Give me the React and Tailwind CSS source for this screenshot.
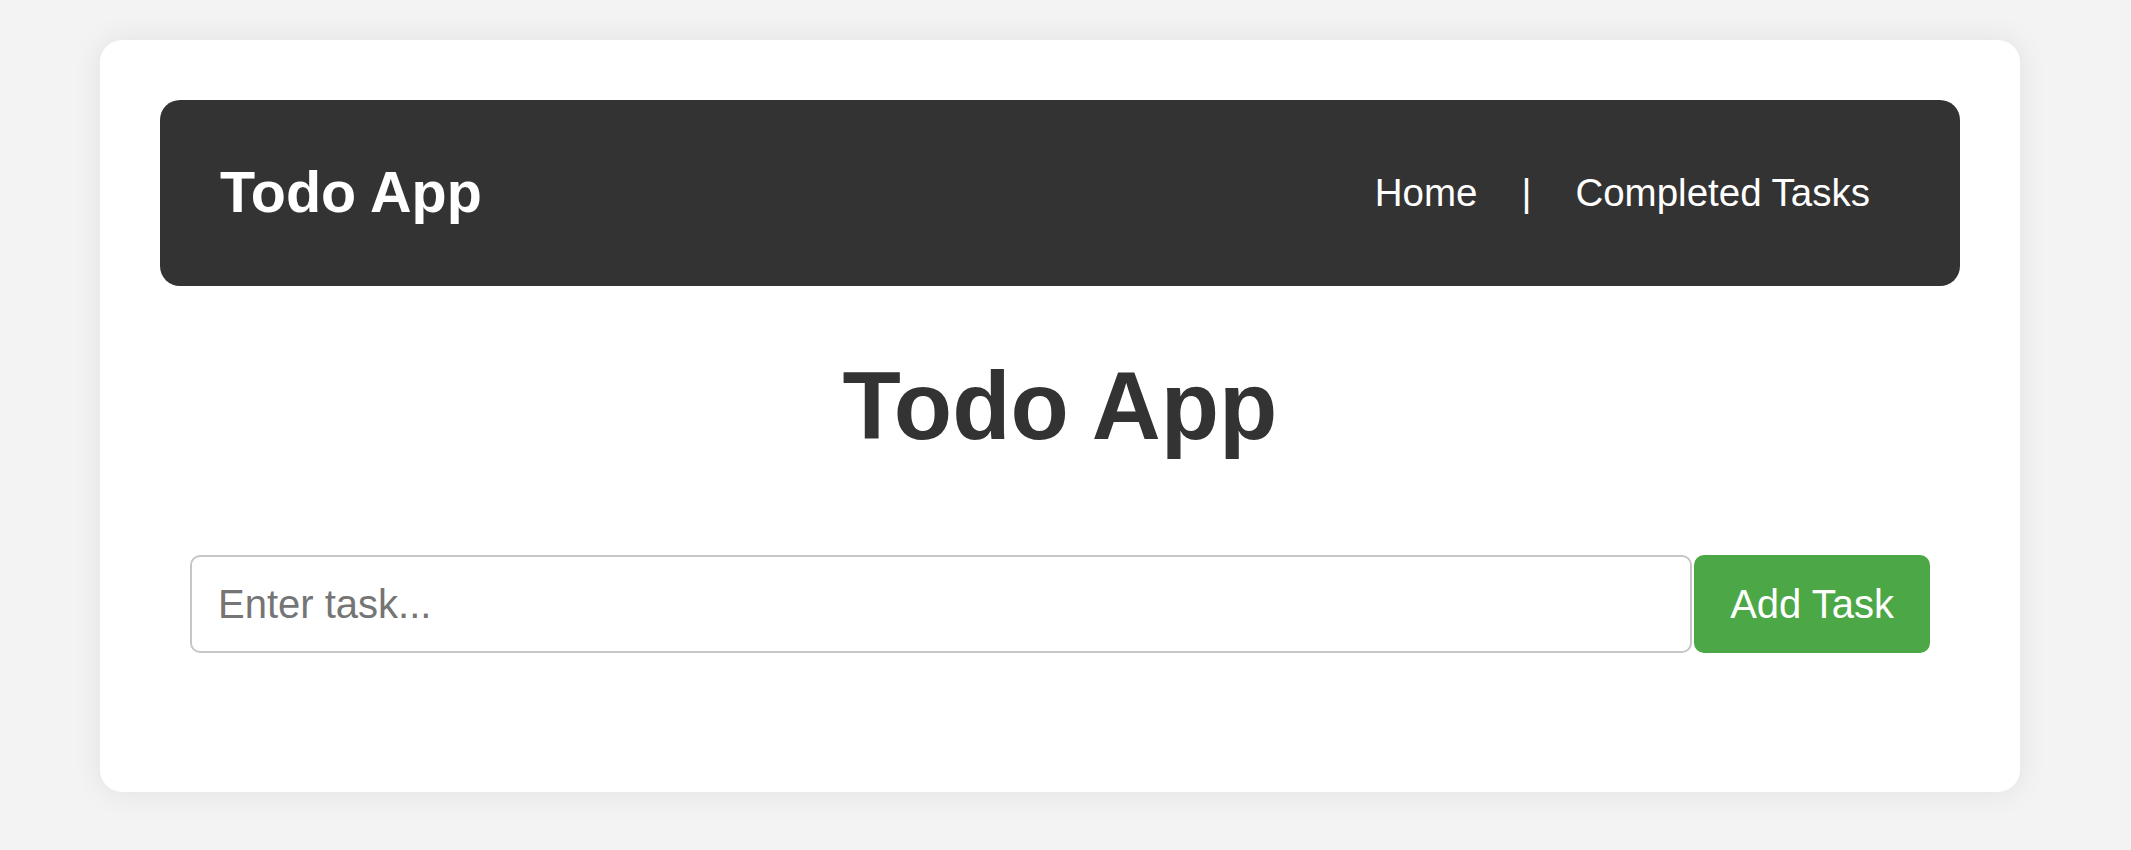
import React from "react";

export default function App() {
  return (
    <div
      className="min-h-[850px] w-full bg-[#f3f3f3] pt-[40px]"
      style={{ fontFamily: '"Liberation Sans", Arial, sans-serif' }}
    >
      <div className="ml-[100px] w-[1920px] h-[752px] rounded-[22px] bg-white p-[60px] shadow-[0_0_30px_rgba(0,0,0,0.08)] flex flex-col">
        <nav className="h-[186px] rounded-[20px] bg-[#333333] px-[60px] flex items-center justify-between text-white">
          <div className="text-[57.5px] font-bold leading-none">Todo App</div>
          <div className="flex items-center gap-[44px] mr-[30px] text-[38.5px] leading-none">
            <a className="text-white">Home</a>
            <span>|</span>
            <a className="text-white">Completed Tasks</a>
          </div>
        </nav>
        <h1 className="mt-[66px] text-center text-[95.5px] leading-[108px] font-bold text-[#333333]">
          Todo App
        </h1>
        <div className="mt-[95px] px-[30px] flex items-stretch gap-[2px]">
          <input
            type="text"
            placeholder="Enter task..."
            className="flex-1 h-[98px] rounded-[10px] border-2 border-[#c6c6c6] bg-white px-[26px] text-[40px] text-[#333333] placeholder:text-[#757575] outline-none"
            style={{ fontFamily: '"Liberation Sans", Arial, sans-serif' }}
          />
          <button
            className="h-[98px] rounded-[10px] bg-[#4ca847] px-[36px] text-[40px] text-white"
            style={{ fontFamily: '"Liberation Sans", Arial, sans-serif' }}
          >
            Add Task
          </button>
        </div>
      </div>
    </div>
  );
}
